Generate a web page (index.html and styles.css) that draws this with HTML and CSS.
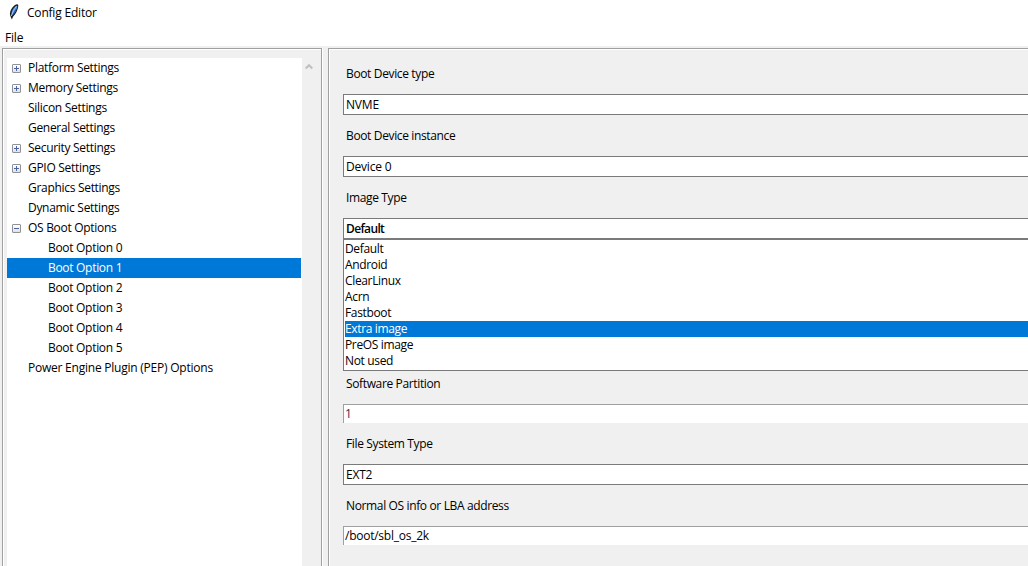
FILE: index.html
```html
<!DOCTYPE html>
<html lang="en">
<head>
<meta charset="utf-8">
<title>Config Editor</title>
<link rel="stylesheet" href="styles.css">
</head>
<body>
<header class="titlebar">
  <svg class="feather" width="12" height="16" viewBox="0 0 12 16">
    <path d="M3.9 15.500C2.600 12.500 1.200 10.500 2.300 7.500 3.400 4 6.500.8 9 .3c1.200-.2 1.500.9 1.200 2.500C9.700 6 7.900 10 5 12.800z" fill="#1b1f26"/>
    <path d="M3.600 11.200C3 8 4.700 4.600 7 2.700c1-.9 2-1.200 2.200-.7.300.9-.3 2.800-1.400 4.900-1.200 2.200-2.600 4-4.200 4.300z" fill="#4b8ad8"/>
    <path d="M8.500 2.300C6.400 4.600 4.700 7.800 3.400 12" fill="none" stroke="#a9d0f5" stroke-width=".9"/>
    <path d="M8.400 5.200 5 10.600" fill="none" stroke="#244f91" stroke-width=".9"/>
  </svg>
  <span class="title">Config Editor</span>
</header>
<nav class="menubar"><span class="menu-item">File</span></nav>
<main class="workspace">
  <section class="frame tree-frame">
    <ul class="tree">
      <li class="node"><i class="toggle plus"></i><span>Platform Settings</span></li>
      <li class="node"><i class="toggle plus"></i><span>Memory Settings</span></li>
      <li class="node"><span>Silicon Settings</span></li>
      <li class="node"><span>General Settings</span></li>
      <li class="node"><i class="toggle plus"></i><span>Security Settings</span></li>
      <li class="node"><i class="toggle plus"></i><span>GPIO Settings</span></li>
      <li class="node"><span>Graphics Settings</span></li>
      <li class="node"><span>Dynamic Settings</span></li>
      <li class="node"><i class="toggle"></i><span>OS Boot Options</span></li>
      <li class="node child"><span>Boot Option 0</span></li>
      <li class="node child selected"><span>Boot Option 1</span></li>
      <li class="node child"><span>Boot Option 2</span></li>
      <li class="node child"><span>Boot Option 3</span></li>
      <li class="node child"><span>Boot Option 4</span></li>
      <li class="node child"><span>Boot Option 5</span></li>
      <li class="node"><span class="long">Power Engine Plugin (PEP) Options</span></li>
    </ul>
    <div class="scrollbar">
      <svg width="8" height="7" viewBox="0 0 8 7"><path d="M.7 5.500 4 2.200 7.300 5.500" fill="none" stroke="#bfbfbf" stroke-width="2"/></svg>
    </div>
  </section>
  <section class="frame form-frame">
    <div class="label">Boot Device type</div>
    <div class="combo">NVME</div>
    <div class="label">Boot Device instance</div>
    <div class="combo">Device 0</div>
    <div class="label">Image Type</div>
    <div class="combo open">Default</div>
    <ul class="list">
      <li>Default</li>
      <li>Android</li>
      <li>ClearLinux</li>
      <li>Acrn</li>
      <li>Fastboot</li>
      <li class="selected">Extra image</li>
      <li>PreOS image</li>
      <li>Not used</li>
    </ul>
    <div class="label">Software Partition</div>
    <div class="entry number">1</div>
    <div class="label">File System Type</div>
    <div class="combo">EXT2</div>
    <div class="label">Normal OS info or LBA address</div>
    <div class="entry">/boot/sbl_os_2k</div>
  </section>
</main>
</body>
</html>
```
FILE: styles.css
```css
* { box-sizing: border-box; }
body {
  margin: 0;
  height: 566px;
  overflow: hidden;
  display: flex;
  flex-direction: column;
  background: #f0f0f0;
  color: #000;
  font: 12px/20px "Open Sans", "Noto Sans", sans-serif;
  letter-spacing: -0.2px;
  white-space: nowrap;
}
ul { list-style: none; margin: 0; padding: 0; }
.titlebar { flex: none; height: 28px; background: #fff; display: flex; padding: 3px 0 0 8px; }
.feather { margin-top: 1px; }
.title { margin-left: 7px; }
.menubar { flex: none; height: 18px; background: #fff; padding-left: 5px; }
.menu-item { display: block; }
.workspace { flex: 1; min-height: 0; display: flex; gap: 5px; padding: 2px 0 0 2px; }
.frame {
  height: 530px;
  border: 1px solid #a0a0a0;
  box-shadow: inset 1px 1px #fff, 1px 0 #fff;
}
.tree-frame { flex: none; width: 320px; display: flex; padding: 9px 0 0 4px; margin-right: 1px; }
.tree { width: 295px; background: #fff; letter-spacing: -0.3px; }
.node { height: 20px; width: 294px; padding-left: 21px; display: flex; }
.child { padding-left: 41px; }
.long { letter-spacing: -0.23px; }
.selected { background: #0078d7; color: #fff; }
.toggle {
  flex: none;
  width: 9px;
  height: 9px;
  margin: 6px 7px 0 -16px;
  border: 1px solid #919191;
  border-radius: 1px;
  background:
    linear-gradient(#4b63a7, #4b63a7) center / 5px 1px no-repeat,
    linear-gradient(#fff, #e1e1e1);
}
.plus {
  background:
    linear-gradient(#4b63a7, #4b63a7) center / 5px 1px no-repeat,
    linear-gradient(#4b63a7, #4b63a7) center / 1px 5px no-repeat,
    linear-gradient(#fff, #e1e1e1);
}
.scrollbar { width: 17px; padding: 5px 0 0 3px; display: flex; align-items: flex-start; }
.form-frame { flex: 1; border-right: 0; padding: 15px 0 0 14px; }
.label { height: 20px; margin-bottom: 10px; padding-left: 3px; letter-spacing: -0.36px; }
.combo {
  height: 21px;
  margin-bottom: 11px;
  padding-left: 2px;
  border: 1px solid #7a7a7a;
  border-right: 0;
  background: #fff;
}
.open { margin-bottom: 0; font-weight: 600; letter-spacing: -0.65px; }
.list {
  height: 132px;
  margin-bottom: 3px;
  padding: 1px 0 0 1px;
  border: 1px solid #7a7a7a;
  border-right: 0;
  background: #fff;
  line-height: 16px;
  letter-spacing: -0.35px;
}
.list li { height: 16px; }
.entry {
  height: 19px;
  margin-bottom: 11px;
  padding-left: 1px;
  border: solid #a0a0a0;
  border-width: 1px 0 0 1px;
  background: #fff;
  line-height: 17px;
  letter-spacing: -0.25px;
}
.number { color: #501a50; }
```
